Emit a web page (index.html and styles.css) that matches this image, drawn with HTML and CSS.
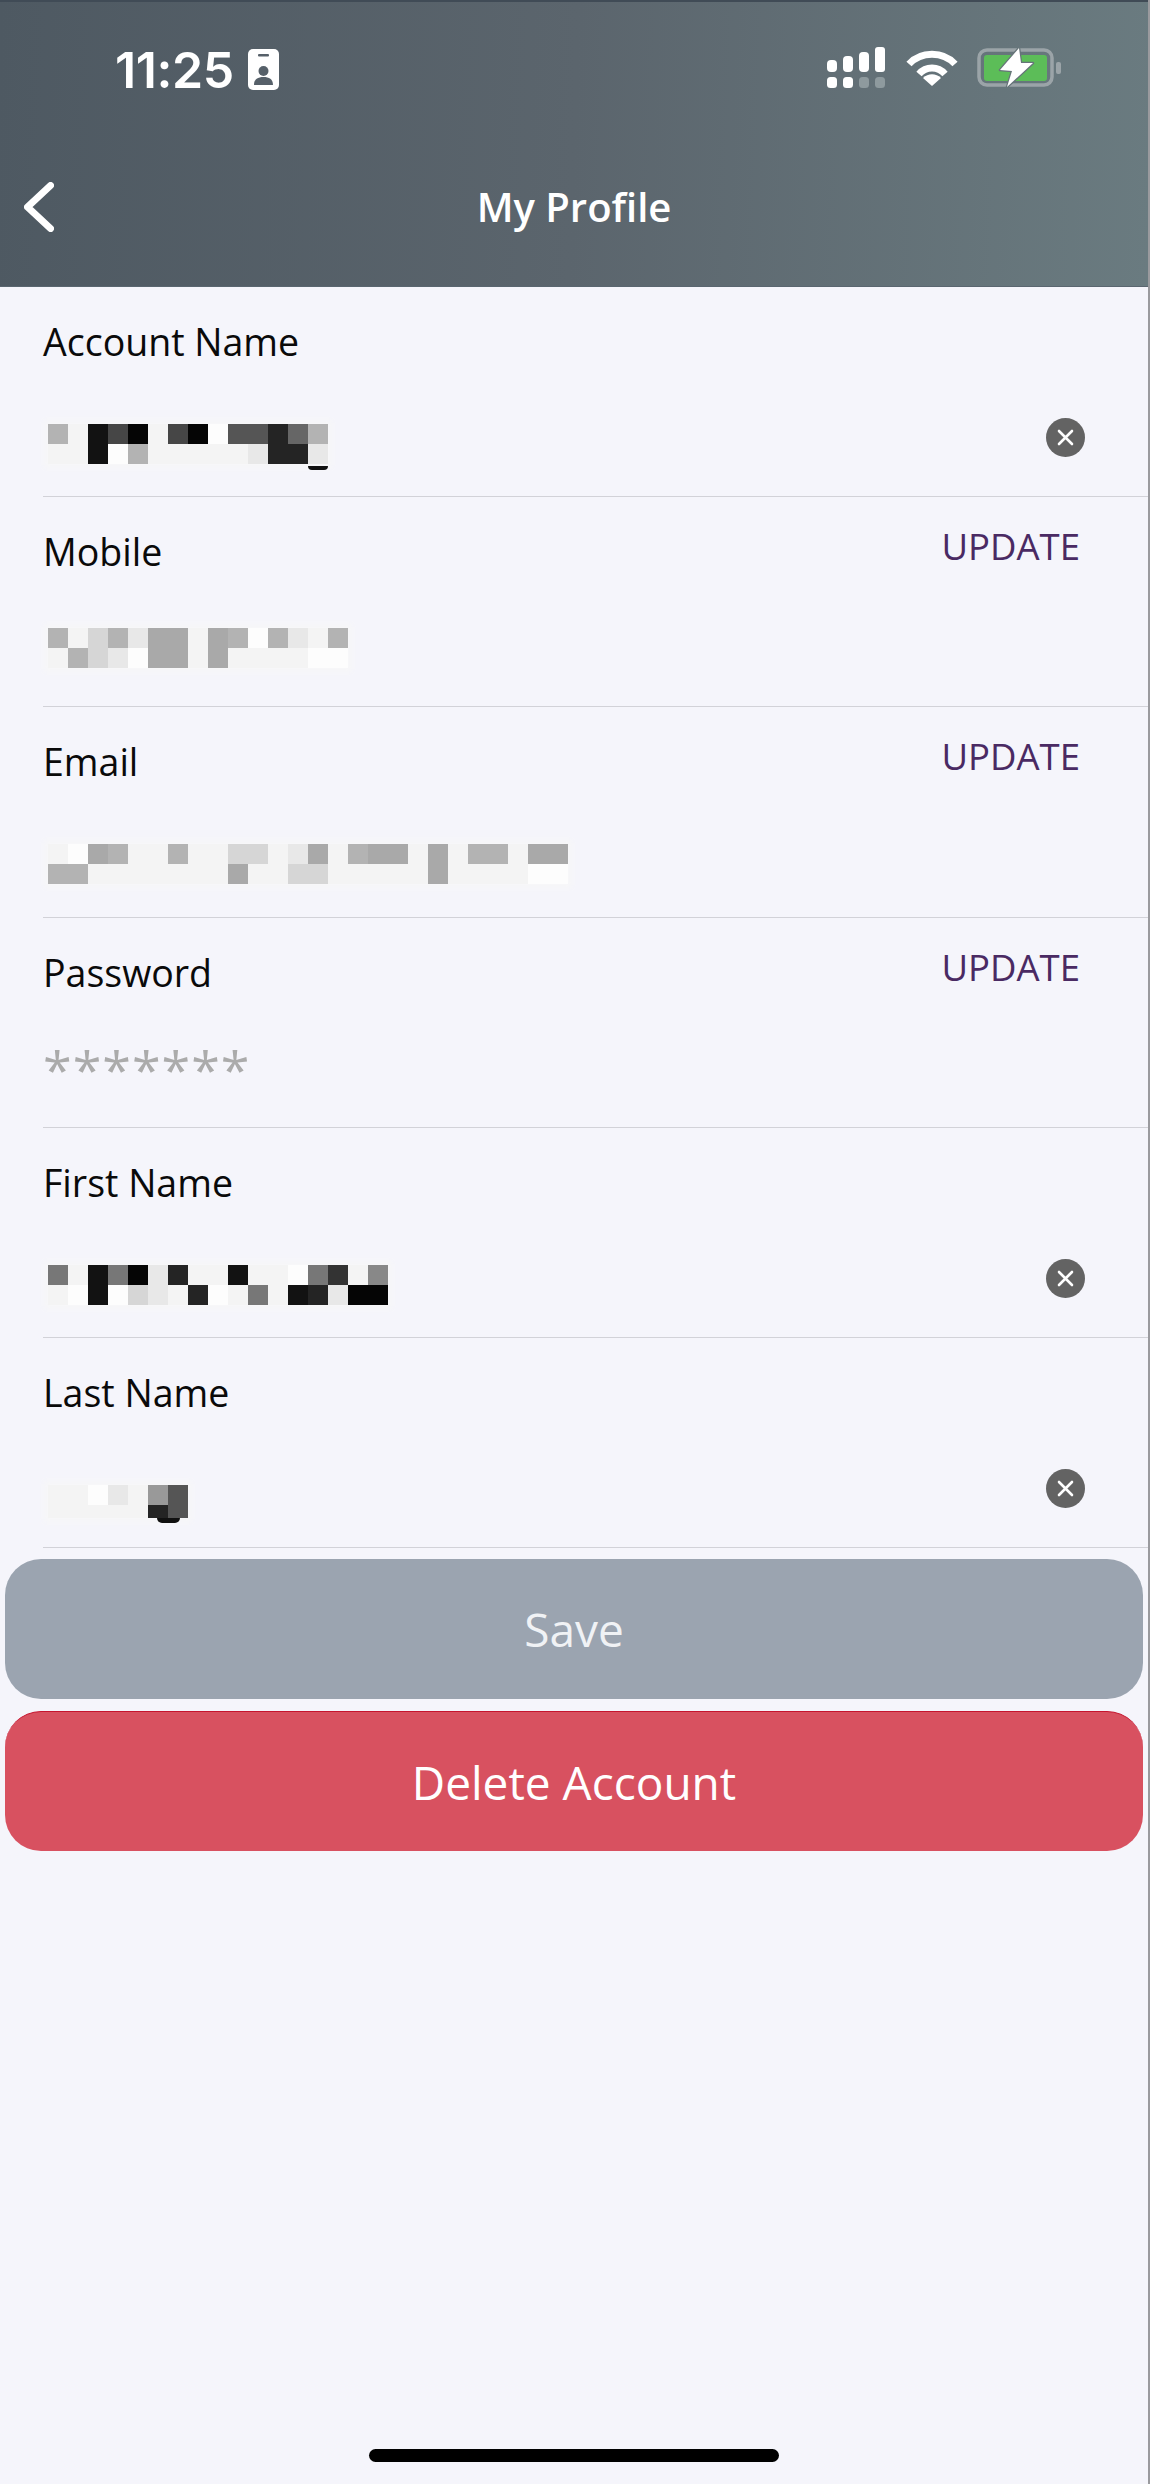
FILE: index.html
```html
<!DOCTYPE html>
<html lang="en">
<head>
<meta charset="utf-8">
<title>My Profile</title>
<link rel="stylesheet" href="styles.css">
</head>
<body>
<div class="page">
  <header class="header">
    <div class="status">
      <div class="status-left">
        <span class="time">11:25</span>
        <svg class="id-badge" viewBox="0 0 31 41"><rect width="31" height="41" rx="5" fill="#fff"/><rect x="10" y="5" width="11" height="2.5" rx="1" fill="#566069"/><circle cx="15.500" cy="22" r="5" fill="#566069"/><path d="M6 36c0-6 4-8 9.500-8s9.500 2 9.500 8z" fill="#566069"/></svg>
      </div>
      <div class="status-right">
        <svg class="signal" viewBox="0 0 60 41" fill="#fff">
          <rect x="0" y="13" width="10" height="12" rx="4"/><rect x="16" y="9" width="10" height="16" rx="4"/><rect x="32" y="5" width="10" height="20" rx="4"/><rect x="48" y="0" width="10" height="25" rx="3"/>
          <rect x="0" y="30" width="10" height="11" rx="3.500"/><rect x="16" y="30" width="10" height="11" rx="3.500"/><rect class="dim" x="32" y="30" width="10" height="11" rx="3.500"/><rect class="dim" x="48" y="30" width="10" height="11" rx="3.500"/>
        </svg>
        <svg class="wifi" viewBox="0 0 52 38" fill="none" stroke="#fff"><path d="M3 16C15 3 37 3 49 16" stroke-width="7"/><path d="M13 26C20 18 32 18 39 26" stroke-width="7"/><path d="M26 38L17 30C22 25 30 25 35 30Z" fill="#fff" stroke="none"/></svg>
        <svg class="battery" viewBox="0 0 84 39"><rect x="2" y="2" width="73" height="35" rx="8" fill="none" stroke="#9ba4a8" stroke-width="3.500"/><rect x="79" y="14" width="5" height="12" rx="2" fill="#9ba4a8"/><rect x="7" y="7" width="63" height="26" rx="3" fill="#5cbd58"/><path d="M42 0L23 22L35 23L30 39L56 15L44 15Z" fill="#fff" stroke="#667479" stroke-width="2.500" stroke-linejoin="round" paint-order="stroke"/></svg>
      </div>
    </div>
    <nav class="nav">
      <svg class="back" viewBox="0 0 30 50" fill="none" stroke="#fff" stroke-width="7" stroke-linecap="round" stroke-linejoin="round"><path d="M26.500 3.500L3.500 25L26.500 46.500"/></svg>
      <h1 class="title">My Profile</h1>
    </nav>
  </header>

  <main class="fields">
    <section class="field">
      <div class="field-head"><span class="label">Account Name</span></div>
      <div class="field-value">
        <div class="mosaic tail-13">
          <i class="kb"></i><i class="kf"></i><i class="kf"></i><i class="kf"></i><i class="k1"></i><i class="k1"></i><i class="k4"></i><i class="kw"></i><i class="k0"></i><i class="kb"></i><i class="kf"></i><i class="kf"></i><i class="k4"></i><i class="kf"></i><i class="k0"></i><i class="kf"></i><i class="kw"></i><i class="kf"></i><i class="k5"></i><i class="kf"></i><i class="k5"></i><i class="ke"></i><i class="k2"></i><i class="k2"></i><i class="k6"></i><i class="k2"></i><i class="kb"></i><i class="ke"></i>
        </div>
        <button class="clear"><svg viewBox="0 0 39 39"><circle cx="19.500" cy="19.500" r="19.500" fill="#636363"/><path d="M13 13L26 26M26 13L13 26" stroke="#fff" stroke-width="2.600" stroke-linecap="round"/></svg></button>
      </div>
    </section>

    <section class="field">
      <div class="field-head"><span class="label">Mobile</span><span class="update">UPDATE</span></div>
      <div class="field-value">
        <div class="mosaic mosaic-up">
          <i class="kb"></i><i class="kf"></i><i class="kf"></i><i class="kb"></i><i class="kd"></i><i class="kd"></i><i class="kb"></i><i class="ke"></i><i class="ke"></i><i class="kw"></i><i class="ka"></i><i class="ka"></i><i class="ka"></i><i class="ka"></i><i class="kf"></i><i class="kf"></i><i class="ka"></i><i class="ka"></i><i class="kb"></i><i class="kf"></i><i class="kw"></i><i class="kf"></i><i class="kb"></i><i class="kf"></i><i class="ke"></i><i class="kf"></i><i class="kf"></i><i class="kw"></i><i class="kb"></i><i class="kw"></i>
        </div>
      </div>
    </section>

    <section class="field">
      <div class="field-head"><span class="label">Email</span><span class="update">UPDATE</span></div>
      <div class="field-value">
        <div class="mosaic">
          <i class="kf"></i><i class="kb"></i><i class="kw"></i><i class="kb"></i><i class="ka"></i><i class="kf"></i><i class="kb"></i><i class="kf"></i><i class="kf"></i><i class="kf"></i><i class="kf"></i><i class="kf"></i><i class="kb"></i><i class="kf"></i><i class="kf"></i><i class="kf"></i><i class="kf"></i><i class="kf"></i><i class="kd"></i><i class="ka"></i><i class="kd"></i><i class="kf"></i><i class="kf"></i><i class="kf"></i><i class="ke"></i><i class="kd"></i><i class="ka"></i><i class="kd"></i><i class="kf"></i><i class="kf"></i><i class="kb"></i><i class="kf"></i><i class="ka"></i><i class="kf"></i><i class="ka"></i><i class="kf"></i><i class="kf"></i><i class="kf"></i><i class="ka"></i><i class="ka"></i><i class="kf"></i><i class="kf"></i><i class="kb"></i><i class="kf"></i><i class="kb"></i><i class="kf"></i><i class="kf"></i><i class="kf"></i><i class="ka"></i><i class="kw"></i><i class="ka"></i><i class="kw"></i>
        </div>
      </div>
    </section>

    <section class="field">
      <div class="field-head"><span class="label">Password</span><span class="update">UPDATE</span></div>
      <div class="field-value"><span class="stars">*******</span></div>
    </section>

    <section class="field">
      <div class="field-head"><span class="label">First Name</span></div>
      <div class="field-value">
        <div class="mosaic">
          <i class="k7"></i><i class="kf"></i><i class="kf"></i><i class="kw"></i><i class="k1"></i><i class="k1"></i><i class="k7"></i><i class="kw"></i><i class="k0"></i><i class="kd"></i><i class="ke"></i><i class="ke"></i><i class="k2"></i><i class="kf"></i><i class="kf"></i><i class="k2"></i><i class="kf"></i><i class="kw"></i><i class="k1"></i><i class="kf"></i><i class="kf"></i><i class="k7"></i><i class="kf"></i><i class="kf"></i><i class="kw"></i><i class="k1"></i><i class="k7"></i><i class="k2"></i><i class="k3"></i><i class="ke"></i><i class="kf"></i><i class="k0"></i><i class="k8"></i><i class="k0"></i>
        </div>
        <button class="clear"><svg viewBox="0 0 39 39"><circle cx="19.500" cy="19.500" r="19.500" fill="#636363"/><path d="M13 13L26 26M26 13L13 26" stroke="#fff" stroke-width="2.600" stroke-linecap="round"/></svg></button>
      </div>
    </section>

    <section class="field">
      <div class="field-head"><span class="label">Last Name</span></div>
      <div class="field-value">
        <div class="mosaic mosaic-low tail-5">
          <i class="kf"></i><i class="kf"></i><i class="kf"></i><i class="kf"></i><i class="kw"></i><i class="kf"></i><i class="ke"></i><i class="kf"></i><i class="kf"></i><i class="kf"></i><i class="k9"></i><i class="k2"></i><i class="k5"></i><i class="k5"></i>
        </div>
        <button class="clear"><svg viewBox="0 0 39 39"><circle cx="19.500" cy="19.500" r="19.500" fill="#636363"/><path d="M13 13L26 26M26 13L13 26" stroke="#fff" stroke-width="2.600" stroke-linecap="round"/></svg></button>
      </div>
    </section>
  </main>

  <div class="actions">
    <button class="btn btn-save">Save</button>
    <button class="btn btn-delete">Delete Account</button>
  </div>

  <div class="home-bar"></div>
</div>
</body>
</html>
```

FILE: styles.css
```css
* { box-sizing: border-box; }

html, body {
  margin: 0;
  padding: 0;
  background: #f5f5fb;
}

body {
  font-family: "Open Sans", "Noto Sans", sans-serif;
  color: #0a0a0a;
}

.page {
  display: flex;
  flex-direction: column;
  height: 2484px;
  width: 1150px;
  border-right: 2px solid #9a9a9e;
}

/* Header */
.header {
  height: 287px;
  flex: none;
  background: linear-gradient(92deg, #4e5962 0%, #5b656d 50%, #6a7b80 100%);
  border-top: 2px solid #404b56;
  border-bottom: 1px solid #5a6670;
  color: #fff;
}

.status {
  display: flex;
  justify-content: space-between;
  align-items: flex-start;
  padding: 45px 87px 0 115px;
  height: 128px;
}

.status-left {
  display: flex;
  align-items: flex-start;
  gap: 14px;
}

.time {
  font-family: Inter, sans-serif;
  font-size: 50px;
  font-weight: 600;
  line-height: 46px;
  letter-spacing: -0.400px;
}

.id-badge {
  width: 31px;
  height: 41px;
  margin-top: 2px;
}

.status-right {
  display: flex;
  align-items: flex-start;
  gap: 19px;
}

.signal { width: 60px; height: 41px; }
.signal .dim { fill: #8e9a9e; }
.wifi { width: 52px; height: 38px; margin-top: 1px; }
.battery { width: 84px; height: 39px; margin-top: 1px; }

.nav {
  position: relative;
  display: flex;
  justify-content: center;
  align-items: center;
  height: 156px;
}

.back {
  position: absolute;
  left: 24px;
  top: 52px;
  width: 30px;
  height: 50px;
}

.title {
  margin: 0;
  font-size: 40px;
  font-weight: 600;
  line-height: 52px;
  transform: translateY(-1px);
}

/* Fields */
.field {
  height: 210.200px;
  margin-left: 43px;
  padding-top: 30px;
  border-bottom: 1px solid #d2d2d8;
}

.field-head {
  display: flex;
  justify-content: space-between;
  align-items: flex-start;
  padding-right: 68px;
  height: 107px;
}

.label {
  font-size: 37.500px;
  line-height: 50px;
  font-weight: 400;
}

.update {
  font-size: 36.500px;
  line-height: 50px;
  font-weight: 400;
  color: #4a2a63;
  margin-top: -6px;
}

.field-value {
  display: flex;
  justify-content: space-between;
  align-items: flex-start;
  padding: 0 63px 0 5px;
}

.mosaic {
  position: relative;
  display: grid;
  grid-auto-flow: column;
  grid-template-rows: 20px 20px;
  grid-auto-columns: 20px;
  background: #f7f7f8;
  box-shadow: 0 0 6px 4px #f7f7f8;
}

.mosaic i { display: block; }

.mosaic-up { margin-top: -6px; }

.mosaic-low {
  margin-top: 10px;
  grid-template-rows: 20px 13px;
}

.tail-13::after,
.tail-5::after {
  content: "";
  position: absolute;
  background: #111;
  border-radius: 0 0 14px 14px;
}

.tail-13::after {
  left: 260px;
  bottom: -6px;
  width: 20px;
  height: 4px;
}

.tail-5::after {
  left: 109px;
  bottom: -5px;
  width: 23px;
  height: 5px;
}

.k0 { background: #050505; }
.k1 { background: #121212; }
.k2 { background: #242424; }
.k3 { background: #333; }
.k4 { background: #464646; }
.k5 { background: #555; }
.k6 { background: #666; }
.k7 { background: #777; }
.k8 { background: #888; }
.k9 { background: #999; }
.ka { background: #a9a9a9; }
.kb { background: #b3b3b3; }
.kd { background: #d6d6d6; }
.ke { background: #e8e8e8; }
.kf { background: #f4f4f4; }
.kw { background: #fdfdfd; }

.stars {
  font-size: 52px;
  line-height: 40px;
  color: #ababab;
  letter-spacing: 1px;
  margin-left: -5px;
  margin-top: -6px;
}

.clear {
  width: 39px;
  height: 39px;
  margin-top: -6px;
  padding: 0;
  border: 0;
  background: none;
}

.clear svg { display: block; width: 39px; height: 39px; }

/* Buttons */
.actions {
  display: flex;
  flex-direction: column;
  gap: 12px;
  padding: 11px 5px 0;
}

.btn {
  height: 140px;
  border: 0;
  border-radius: 36px;
  font-family: inherit;
  font-size: 46px;
  font-weight: 400;
}

.btn-save {
  background: #9ba4b0;
  color: #f0f2f5;
}

.btn-delete {
  background: #d85160;
  border-top: 1px solid #c5142e;
  color: #fff;
}

.home-bar {
  width: 410px;
  height: 13px;
  margin: auto auto 22px;
  background: #000;
  border-radius: 7px;
}
```
